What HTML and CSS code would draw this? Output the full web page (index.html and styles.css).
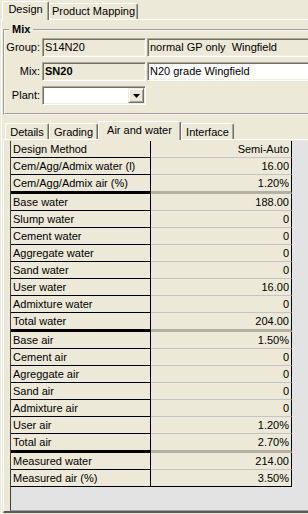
FILE: index.html
```html
<!DOCTYPE html>
<html>

<head>
    <link rel="stylesheet" href="styles.css">
</head>

<body>
    <div class="tabs tabs-outer">
        <div class="tab active" style="width: 47px">Design</div>
        <div class="tab" style="width: 89px">Product Mapping</div>
    </div>
    <div class="page">
        <fieldset class="mix">
            <legend>Mix</legend>
            <div class="field-row">
                <span class="field-label">Group:</span>
                <div class="input">S14N20</div>
                <div class="input wide">normal GP only&nbsp; Wingfield</div>
            </div>
            <div class="field-row">
                <span class="field-label">Mix:</span>
                <div class="input bold">SN20</div>
                <div class="input wide white">N20 grade Wingfield</div>
            </div>
            <div class="field-row">
                <span class="field-label">Plant:</span>
                <div class="input white select">
                    <span class="drop-btn">
                        <svg width="7" height="4" viewBox="0 0 7 4"><polygon points="0,0 7,0 3.5,4" fill="#000" /></svg>
                    </span>
                </div>
            </div>
        </fieldset>

        <div class="tabs tabs-inner">
            <div class="tab" style="width: 44px">Details</div>
            <div class="tab" style="width: 49px">Grading</div>
            <div class="tab active" style="width: 83px">Air and water</div>
            <div class="tab" style="width: 53px">Interface</div>
        </div>
        <div class="panel">
            <div class="grid">
                <table class="values">
                    <tr><td class="name">Design Method</td><td class="val">Semi-Auto</td></tr>
                    <tr><td class="name">Cem/Agg/Admix water (l)</td><td class="val">16.00</td></tr>
                    <tr class="sep"><td class="name">Cem/Agg/Admix air (%)</td><td class="val">1.20%</td></tr>
                    <tr><td class="name">Base water</td><td class="val">188.00</td></tr>
                    <tr><td class="name">Slump water</td><td class="val">0</td></tr>
                    <tr><td class="name">Cement water</td><td class="val">0</td></tr>
                    <tr><td class="name">Aggregate water</td><td class="val">0</td></tr>
                    <tr><td class="name">Sand water</td><td class="val">0</td></tr>
                    <tr><td class="name">User water</td><td class="val">16.00</td></tr>
                    <tr><td class="name">Admixture water</td><td class="val">0</td></tr>
                    <tr class="sep"><td class="name">Total water</td><td class="val">204.00</td></tr>
                    <tr><td class="name">Base air</td><td class="val">1.50%</td></tr>
                    <tr><td class="name">Cement air</td><td class="val">0</td></tr>
                    <tr><td class="name">Agreggate air</td><td class="val">0</td></tr>
                    <tr><td class="name">Sand air</td><td class="val">0</td></tr>
                    <tr><td class="name">Admixture air</td><td class="val">0</td></tr>
                    <tr><td class="name">User air</td><td class="val">1.20%</td></tr>
                    <tr class="sep"><td class="name">Total air</td><td class="val">2.70%</td></tr>
                    <tr><td class="name">Measured water</td><td class="val">214.00</td></tr>
                    <tr class="last"><td class="name">Measured air (%)</td><td class="val">3.50%</td></tr>
                </table>
            </div>
        </div>
    </div>
</body>

</html>
```

FILE: styles.css
```css
html,
body {
    height: 100%;
    overflow: hidden;
}

body {
    margin: 0;
    background-color: #ece9d8;
    font-family: "Liberation Sans", Arial, sans-serif;
    font-size: 11px;
    color: #000;
    display: flex;
    flex-direction: column;
}

/* tab strips */
.tabs {
    display: flex;
    align-items: flex-end;
    flex-shrink: 0;
}

.tabs-outer {
    height: 19px;
    padding-left: 2px;
}

.tabs-inner {
    height: 18px;
    margin-top: 6px;
    padding-left: 3px;
}

.tab {
    box-sizing: border-box;
    height: 16px;
    padding-top: 1px;
    line-height: 13px;
    text-align: center;
    white-space: nowrap;
    border-left: 1px solid #fff;
    border-top: 1px solid #fff;
    border-right: 1px solid #716f64;
    box-shadow: inset -1px 0 #aca899;
    border-radius: 2px 2px 0 0;
}

.tabs-inner .tab {
    padding-top: 2px;
}

.tab.active {
    height: 19px;
    margin-bottom: -1px;
    position: relative;
    background-color: #ece9d8;
}

/* the window is cut off on the right, so the page clips what runs past it */
.page {
    flex: 1;
    display: flex;
    flex-direction: column;
    min-width: 0;
    overflow: hidden;
    margin-left: 1px;
    border-left: 1px solid #fff;
    border-top: 1px solid #fff;
}

/* Mix group */
.mix {
    margin: 3px -12px 0 1px;
    padding: 2px 0 8px;
    border: 2px groove #f4f3ee;
    min-width: 0;
}

.mix legend {
    margin-left: 4px;
    padding: 0 3px;
    font-weight: bold;
    line-height: 13px;
}

.field-row {
    display: flex;
    height: 19px;
    margin-bottom: 5px;
}

.field-row:last-child {
    margin-bottom: 0;
}

.field-label {
    flex-shrink: 0;
    width: 35px;
    margin-right: 2px;
    text-align: right;
    line-height: 19px;
}

.input {
    box-sizing: border-box;
    flex-shrink: 0;
    width: 104px;
    height: 19px;
    padding-left: 2px;
    line-height: 17px;
    white-space: nowrap;
    overflow: hidden;
    border-top: 1px solid #aca899;
    border-left: 1px solid #aca899;
    border-bottom: 1px solid #fff;
    border-right: 1px solid #fff;
    box-shadow: inset 1px 1px #716f64, inset -1px -1px #f1efe2;
}

.input.wide {
    width: 200px;
    margin-left: 1px;
}

.input.white {
    background-color: #fff;
}

.bold {
    font-weight: bold;
}

.select {
    display: flex;
    justify-content: flex-end;
    padding: 1px;
}

.drop-btn {
    box-sizing: border-box;
    width: 16px;
    height: 15px;
    display: flex;
    align-items: center;
    justify-content: center;
    background-color: #ece9d8;
    border-top: 1px solid #f1efe2;
    border-left: 1px solid #f1efe2;
    border-right: 1px solid #716f64;
    border-bottom: 1px solid #716f64;
    box-shadow: inset 1px 1px #fff, inset -1px -1px #aca899;
}

/* Air and water panel */
.panel {
    flex: 1;
    display: flex;
    flex-direction: column;
    margin: 0 0 1px 1px;
    padding: 1px 0 0 6px;
    border-left: 1px solid #fff;
    border-top: 1px solid #fff;
    border-bottom: 2px solid #5a5a5a;
}

.grid {
    flex: 1;
    background-color: #e3e3e3;
    border-left: 1px solid #404040;
    border-bottom: 1px solid #a0a0a0;
}

.values {
    border-collapse: separate;
    border-spacing: 0;
    background-color: #ece9d8;
}

.values td {
    height: 16px;
    line-height: 16px;
    padding: 0;
    white-space: nowrap;
}

.name {
    width: 137px;
    padding-left: 2px !important;
    border-right: 1px solid #000;
    border-bottom: 1px solid #000;
}

.val {
    width: 136px;
    padding: 0 2px !important;
    text-align: right;
    border-right: 1px solid #000;
    border-bottom: 1px solid #c4c4c4;
}

.sep .name {
    border-bottom: 3px solid #000;
}

.sep .val {
    border-bottom: 3px solid #b3b0a4;
}

.last .val {
    border-bottom-color: #000;
}
```
